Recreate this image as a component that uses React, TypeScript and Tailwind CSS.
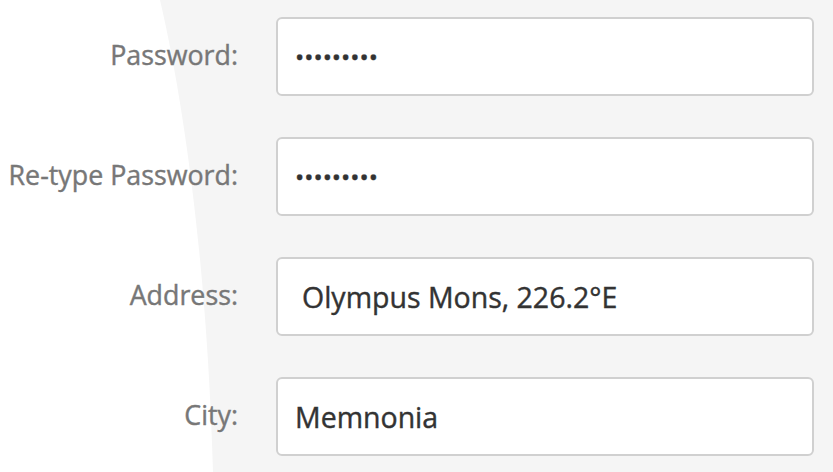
import React from "react";

const fields = [
  { label: "Password:", type: "password", value: "password1", pad: "pl-[17px]" },
  { label: "Re-type Password:", type: "password", value: "password1", pad: "pl-[17px]" },
  { label: "Address:", type: "text", value: "Olympus Mons, 226.2°E", pad: "pl-[24px]" },
  { label: "City:", type: "text", value: "Memnonia", pad: "pl-[17px]" },
];

export default function App() {
  return (
    <div className="relative w-[833px] h-[472px] overflow-hidden bg-white font-['Open_Sans',sans-serif]">
      {/* curved grey backdrop */}
      <svg className="absolute inset-0 pointer-events-none" width="833" height="472" viewBox="0 0 833 472">
        <path d="M160 0 C 188 120, 208 290, 213 472 L833 472 L833 0 Z" fill="#f5f5f5" />
      </svg>

      <div className="relative flex flex-col gap-[41px] pt-[17px]">
        {fields.map((f) => (
          <div key={f.label} className="flex items-center">
            <label className="w-[238px] pb-[2px] text-right text-[26.8px] leading-none text-[#777] [-webkit-text-stroke:0.4px]">
              {f.label}
            </label>
            <input
              readOnly
              type={f.type}
              value={f.value}
              className={`ml-[38px] w-[538px] h-[79px] rounded-[6px] border-2 border-[#d0d0d0] bg-white ${f.pad} outline-none text-[#333] [-webkit-text-stroke:0.4px] ${
                f.type === "password" ? "text-[24.5px]" : "text-[28.5px]"
              }`}
            />
          </div>
        ))}
      </div>
    </div>
  );
}
